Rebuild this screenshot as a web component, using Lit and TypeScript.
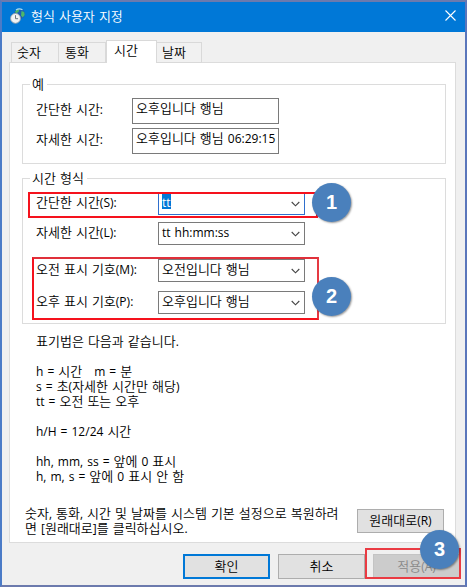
import { LitElement, html, css } from "lit";
import { customElement } from "lit/decorators.js";

/* Splits mixed text so that Latin runs get their own, slightly smaller face. */
const mix = (text: string) =>
  text
    .split(/([\x20-\x7e]+)/)
    .filter(Boolean)
    .map((run) => (/^[\x20-\x7e]/.test(run) ? html`<span class="en">${run}</span>` : run));

const combos = [
  { label: "간단한 시간(S):", value: "tt", focused: true },
  { label: "자세한 시간(L):", value: "tt hh:mm:ss", focused: false },
  { label: "오전 표시 기호(M):", value: "오전입니다 행님", focused: false },
  { label: "오후 표시 기호(P):", value: "오후입니다 행님", focused: false },
];

const notes = [
  "표기법은 다음과 같습니다.",
  "",
  "h = 시간   m = 분",
  "s = 초(자세한 시간만 해당)",
  "tt = 오전 또는 오후",
  "",
  "h/H = 12/24 시간",
  "",
  "hh, mm, ss = 앞에 0 표시",
  "h, m, s = 앞에 0 표시 안 함",
];

@customElement("app-root")
export class AppRoot extends LitElement {
  static styles = css`
    :host {
      display: block;
      width: 467px;
      height: 587px;
      position: relative;
      overflow: hidden;
      font: 350 13px/15px "Noto Sans CJK KR", sans-serif;
      color: #000;
      white-space: pre;
    }
    * { box-sizing: border-box; }
    .en { font-family: "Open Sans", "Noto Sans", sans-serif; font-size: 12px; line-height: 1px; font-weight: 400; word-spacing: 0.9px; }
    .window {
      height: 587px;
      border: 2px solid;
      border-color: #6c7aad #5a76bb #6c7aad #4b7bc7;
      background: #f0f0f0;
      display: flex;
      flex-direction: column;
    }
    .title {
      height: 30px;
      flex: none;
      background: #0078d7;
      color: #fff;
      display: flex;
      align-items: center;
      padding: 0 9px 3px 8px;
    }
    .title .name { flex: 1; margin-left: 5px; }
    svg { display: block; flex: none; }
    .tabs { display: flex; align-items: flex-end; height: 31px; margin-left: 9px; flex: none; }
    .tab {
      height: 21px;
      border: 1px solid #d9d9d9;
      border-left-width: 0;
      background: #f1f1f1;
      padding: 1px 0 0 6px;
    }
    .tab.first { width: 48px; border-left-width: 1px; padding-left: 5px; }
    .tab.second { width: 47px; }
    .tab.active { width: 51px; height: 23px; background: #fff; border-bottom: 0; border-left-width: 1px; padding-left: 7px; }
    .tab.last { width: 45px; padding-left: 5px; }
    .panel {
      width: 447px;
      height: 481px;
      margin: -1px 0 0 7px;
      border: 1px solid #dcdcdc;
      background: #fff;
      padding: 21px 12px 0;
      flex: none;
    }
    .tabs { z-index: 1; }
    .group { border: 1px solid #dcdcdc; width: 424px; padding-left: 13px; }
    .caption { height: 14px; margin: -9px 0 0 -6px; width: max-content; padding: 0 3px 0 2px; background: #fff; }
    .sample { height: 80px; }
    .formats { height: 146px; margin-top: 14px; }
    .row { display: flex; height: 30px; }
    .row .label { width: 96px; padding-top: 3px; }
    .field { width: 147px; height: 26px; border: 1px solid #7a7a7a; padding: 1px 0 0 3px; background: #fff; }
    .sample .row:nth-child(2) { margin-top: 8px; }
    .formats .row .label { width: 122px; padding-top: 2px; }
    .formats .row:nth-child(2) { margin-top: 8px; }
    .formats .row:nth-child(3) { height: 37px; }
    .formats .row:nth-child(4) { height: 32px; }
    .combo {
      width: 147px;
      height: 23px;
      border: 1px solid #7a7a7a;
      display: flex;
      justify-content: space-between;
      align-items: center;
      padding: 0 4px 4px 3px;
      background: #fff;
    }
    .combo.focused { border-color: #2f6fcd; }
    .combo svg { position: relative; top: 2px; }
    .focused .value { background: #0078d7; color: #fff; }
    .notes { margin: 9px 0 0 14px; }
    .line { height: 15px; }
    .restore { display: flex; justify-content: space-between; margin: 22px -1px 0 3px; }
    .restore .button { margin-top: 4px; height: 24px; padding-top: 2px; }
    .button {
      width: 87px;
      height: 25px;
      border: 1px solid #adadad;
      background: #e1e1e1;
      text-align: center;
      padding-top: 3px;
    }
    .actions { display: flex; gap: 8px; justify-content: flex-end; margin: 11px 5px 0 0; }
    .default { border: 2px solid #0078d7; padding-top: 2px; }
    .disabled { background: #ccc; border-color: #c4c4c4; color: #898989; }
    .mark { position: absolute; border: 2px solid #f5121d; }
    .mark1 { left: 28px; top: 192px; width: 290px; height: 26px; }
    .mark2 { left: 32px; top: 257px; width: 287px; height: 63px; border-top-color: #e0303a; border-right-color: #e53a43; }
    .mark3 { left: 365px; top: 548px; width: 96px; height: 31px; border-color: #ea3b43; }
    .badge {
      position: absolute;
      width: 39px;
      height: 39px;
      border-radius: 50%;
      background: #4a80bc;
      box-shadow: 1px 1px 2px rgba(0, 0, 0, 0.4);
      color: #fff;
      font: bold 20px/38px "Liberation Sans", sans-serif;
      text-align: center;
    }
    .badge1 { left: 312px; top: 183px; }
    .badge2 { left: 312px; top: 277px; }
    .badge3 { left: 420px; top: 530px; }
  `;

  private chevron() {
    return html`<svg width="9" height="6" viewBox="0 0 9 6">
      <path d="M.7 1 4.5 4.8 8.3 1" fill="none" stroke="#444" stroke-width="1.1" />
    </svg>`;
  }

  private clockIcon() {
    return html`<svg width="16" height="16" viewBox="0 0 16 16">
      <circle cx="9.6" cy="5.8" r="5.4" fill="#1c5fb4" />
      <path d="M5 3.5Q7 .8 9.5 1L8.5 4 6 5.5ZM11.5 3l2.7 1 .5 3-2 2.6-1.7-2.2Z" fill="#4cb86a" />
      <path d="M6 2Q9-.2 12.5 1.8" stroke="#a8dcf5" stroke-width="1.2" fill="none" />
      <circle cx="5.5" cy="10.4" r="4.9" fill="#f1f2f3" stroke="#9aa5ad" stroke-width=".9" />
      <path d="M5.5 7.2v3.5h2.6" fill="none" stroke="#68757e" />
    </svg>`;
  }

  render() {
    return html`<div class="window"><div class="title">${this.clockIcon()}<span class="name">${mix("형식 사용자 지정")}</span><svg width="11" height="11" viewBox="0 0 11 11"><path d="M.5.5l10 10M10.5.5l-10 10" stroke="#fff" stroke-width="1.1" /></svg></div><div class="tabs"><div class="tab first">숫자</div><div class="tab second">통화</div><div class="tab active">시간</div><div class="tab last">날짜</div></div><div class="panel"><div class="group sample"><div class="caption">예</div><div class="row"><div class="label">${mix("간단한 시간:")}</div><div class="field">${mix("오후입니다 행님")}</div></div><div class="row"><div class="label">${mix("자세한 시간:")}</div><div class="field">${mix("오후입니다 행님 06:29:15")}</div></div></div><div class="group formats"><div class="caption">${mix("시간 형식")}</div>${combos.map(
      (c) => html`<div class="row"><div class="label">${mix(c.label)}</div><div class="combo ${c.focused ? "focused" : ""}"><span class="value">${mix(c.value)}</span>${this.chevron()}</div></div>`
    )}</div><div class="notes">${notes.map((n) => html`<div class="line">${mix(n)}</div>`)}</div><div class="restore"><div class="hint"><div class="line">${mix("숫자, 통화, 시간 및 날짜를 시스템 기본 설정으로 복원하려")}</div><div class="line">${mix("면 [원래대로]를 클릭하십시오.")}</div></div><div class="button">${mix("원래대로(R)")}</div></div></div><div class="actions"><div class="button default">확인</div><div class="button">취소</div><div class="button disabled">${mix("적용(A)")}</div></div></div><div class="mark mark1"></div><div class="mark mark2"></div><div class="mark mark3"></div><div class="badge badge1">1</div><div class="badge badge2">2</div><div class="badge badge3">3</div>`;
  }
}
